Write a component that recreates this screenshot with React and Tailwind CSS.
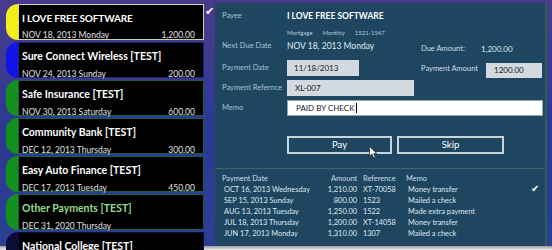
import React from "react";

const cards = [
  { title: "I LOVE FREE SOFTWARE", caps: true, date: "NOV 18, 2013 Monday", amount: "1,200.00", tab: "bg-[#f2ee1a]", border: "border-[#cfcf95]", titleColor: "text-white" },
  { title: "Sure Connect Wireless [TEST]", date: "NOV 24, 2013 Sunday", amount: "200.00", tab: "bg-[#1414e6]", border: "border-[#1a2a70]", titleColor: "text-white" },
  { title: "Safe Insurance [TEST]", date: "NOV 30, 2013 Saturday", amount: "600.00", tab: "bg-[#14901e]", border: "border-[#1d5a48]", titleColor: "text-white" },
  { title: "Community Bank [TEST]", date: "DEC 12, 2013 Thursday", amount: "300.00", tab: "bg-[#14901e]", border: "border-[#1d5a48]", titleColor: "text-white" },
  { title: "Easy Auto Finance [TEST]", date: "DEC 17, 2013 Tuesday", amount: "450.00", tab: "bg-[#14901e]", border: "border-[#1d5a48]", titleColor: "text-white" },
  { title: "Other Payments [TEST]", date: "DEC 31, 2020 Thursday", amount: "", tab: "bg-[#14901e]", border: "border-[#1d5a48]", titleColor: "text-[#93dc8c]" },
  { title: "National College [TEST]", date: "", amount: "", tab: "bg-[#0c0c3a]", border: "border-[#0c0c3a]", titleColor: "text-white" },
];

const history = [
  ["OCT 16, 2013 Wednesday", "1,210.00", "XT-70058", "Money transfer"],
  ["SEP 15, 2013 Sunday", "800.00", "1523", "Mailed a check"],
  ["AUG 13, 2013 Tuesday", "1,250.00", "1522", "Made extra payment"],
  ["JUL 18, 2013 Thursday", "1,200.00", "XT-14058", "Money transfer"],
  ["JUN 17, 2013 Monday", "1,310.00", "1307", "Mailed a check"],
];

function Card({ c, first }) {
  return (
    <div className="relative flex h-[36px] w-[198px] shrink-0">
      <div className={`w-[12px] rounded-l-[12px] ${c.tab}`} />
      <div className={`flex-1 bg-black border ${c.border} pl-[3px] pr-[8px] flex flex-col`}>
        <div
          className={`font-bold leading-none mt-[8px] whitespace-nowrap ${c.titleColor} ${
            c.caps ? "text-[10px] tracking-[-0.15px]" : "text-[10.5px]"
          }`}
        >
          {c.title}
        </div>
        <div className="flex justify-between text-[8.5px] leading-none mt-[8px] text-[#e0e0e0] whitespace-nowrap">
          <span>{c.date}</span>
          <span>{c.amount}</span>
        </div>
      </div>
      {first && (
        <span className="absolute left-[199px] top-[1px] text-white text-[11px] leading-none">✔</span>
      )}
    </div>
  );
}

export default function App() {
  return (
    <div
      className="w-[552px] h-[250px] overflow-hidden flex flex-col bg-gradient-to-b from-[#4a3a8e] via-[#2c3a92] to-[#2b3f92]"
      style={{ fontFamily: 'Lato, "Noto Sans", sans-serif' }}
    >
      <div className="h-[246px] flex">
        <div className="w-[215px] shrink-0 flex flex-col gap-[2px] pt-[4px] pl-[6px]">
          {cards.map((c, i) => (
            <Card key={i} c={c} first={i === 0} />
          ))}
        </div>
        <div className="mt-[3px] w-[332px] h-[243px] bg-[#1e4661] border-r-[2px] border-[#2f5f55] flex flex-col text-[#a9c2d4] text-[7.5px] whitespace-nowrap">
          <div className="pl-[7px] flex flex-col">
            <div className="flex items-center h-[14px] mt-[6px]">
              <span className="w-[65px]">Payee</span>
              <span className="text-white font-bold text-[8.5px]">I LOVE FREE SOFTWARE</span>
            </div>
            <div className="flex h-[8px] mt-[5px] pl-[65px] text-[6px] gap-[10px] text-[#b8cad6] items-center">
              <span>Mortgage</span>
              <span>Monthly</span>
              <span>1521-1547</span>
            </div>
            <div className="flex items-center h-[16px] mt-[2px]">
              <span className="w-[65px]">Next Due Date</span>
              <span className="w-[134px] text-[#dfe8ee] text-[8.5px]">NOV 18, 2013 Monday</span>
              <span className="w-[60px] relative top-[3px] text-[#cfdde6]">Due Amount:</span>
              <span className="relative top-[3px] text-[#dfe8ee] text-[8px]">1,200.00</span>
            </div>
            <div className="flex items-center h-[16px] mt-[6px]">
              <span className="w-[65px]">Payment Date</span>
              <div className="w-[72px] h-[16px] bg-[#d2d9df] text-[#202020] text-[8px] pl-[7px] flex items-center">11/18/2013</div>
              <span className="ml-[62px] w-[65px] relative top-[1px] text-[#cfdde6]">Payment Amount</span>
              <div className="relative top-[2px] w-[56px] h-[15px] bg-[#d2d9df] text-[#202020] text-[8px] pl-[8px] flex items-center">1200.00</div>
            </div>
            <div className="flex items-center h-[16px] mt-[4px]">
              <span className="w-[65px]">Payment Refernce</span>
              <div className="w-[127px] h-[16px] bg-[#d2d9df] text-[#202020] text-[8px] pl-[8px] flex items-center">XL-007</div>
            </div>
            <div className="flex items-center h-[16px] mt-[4px]">
              <span className="w-[65px]">Memo</span>
              <div className="w-[256px] h-[16px] bg-white text-[#202020] text-[8px] pl-[8px] flex items-center border border-[#9aa8b2]">
                PAID BY CHECK<span className="w-px h-[10px] bg-black ml-px" />
              </div>
            </div>
            <div className="flex h-[18px] mt-[20px] pl-[65px] gap-[5px]">
              <div className="relative w-[105px] h-[18px] border-[2px] border-[#c9d3da] text-white text-[9.5px] flex items-center justify-center">
                Pay
                <svg className="absolute left-[80px] top-[8px]" width="9" height="13" viewBox="0 0 9 13">
                  <path d="M0.5 0.5 L0.5 10 L3 8 L4.7 12 L6.3 11.3 L4.6 7.5 L7.8 7.5 Z" fill="white" stroke="#333" strokeWidth="0.8" />
                </svg>
              </div>
              <div className="w-[107px] h-[18px] border-[2px] border-[#c9d3da] text-white text-[9.5px] flex items-center justify-center">
                Skip
              </div>
            </div>
          </div>
          <div className="h-px bg-[#3a6a58] mt-[14px]" />
          <div className="flex flex-col pl-[7px] mt-[4px] text-[7.4px] leading-[11px]">
            <div className="flex text-[#cfdde6]">
              <span className="w-[109px]">Payment Date</span>
              <span className="w-[26px] text-right">Amount</span>
              <span className="w-[49px] pl-[6px]">Reference</span>
              <span>Memo</span>
            </div>
            {history.map((r, i) => (
              <div key={i} className="flex text-[#dfe8ee] relative">
                <span className="w-[105px] pl-[2px]">{r[0]}</span>
                <span className="w-[30px] text-right">{r[1]}</span>
                <span className="w-[49px] pl-[6px]">{r[2]}</span>
                <span className="pl-[2px]">{r[3]}</span>
                {i === 0 && <span className="absolute left-[309px] top-[-1px] text-white text-[10px]">✔</span>}
              </div>
            ))}
          </div>
        </div>
      </div>
      <div className="h-[4px] bg-gradient-to-b from-[#9a9aa0] to-[#f0f0f0]" />
    </div>
  );
}
